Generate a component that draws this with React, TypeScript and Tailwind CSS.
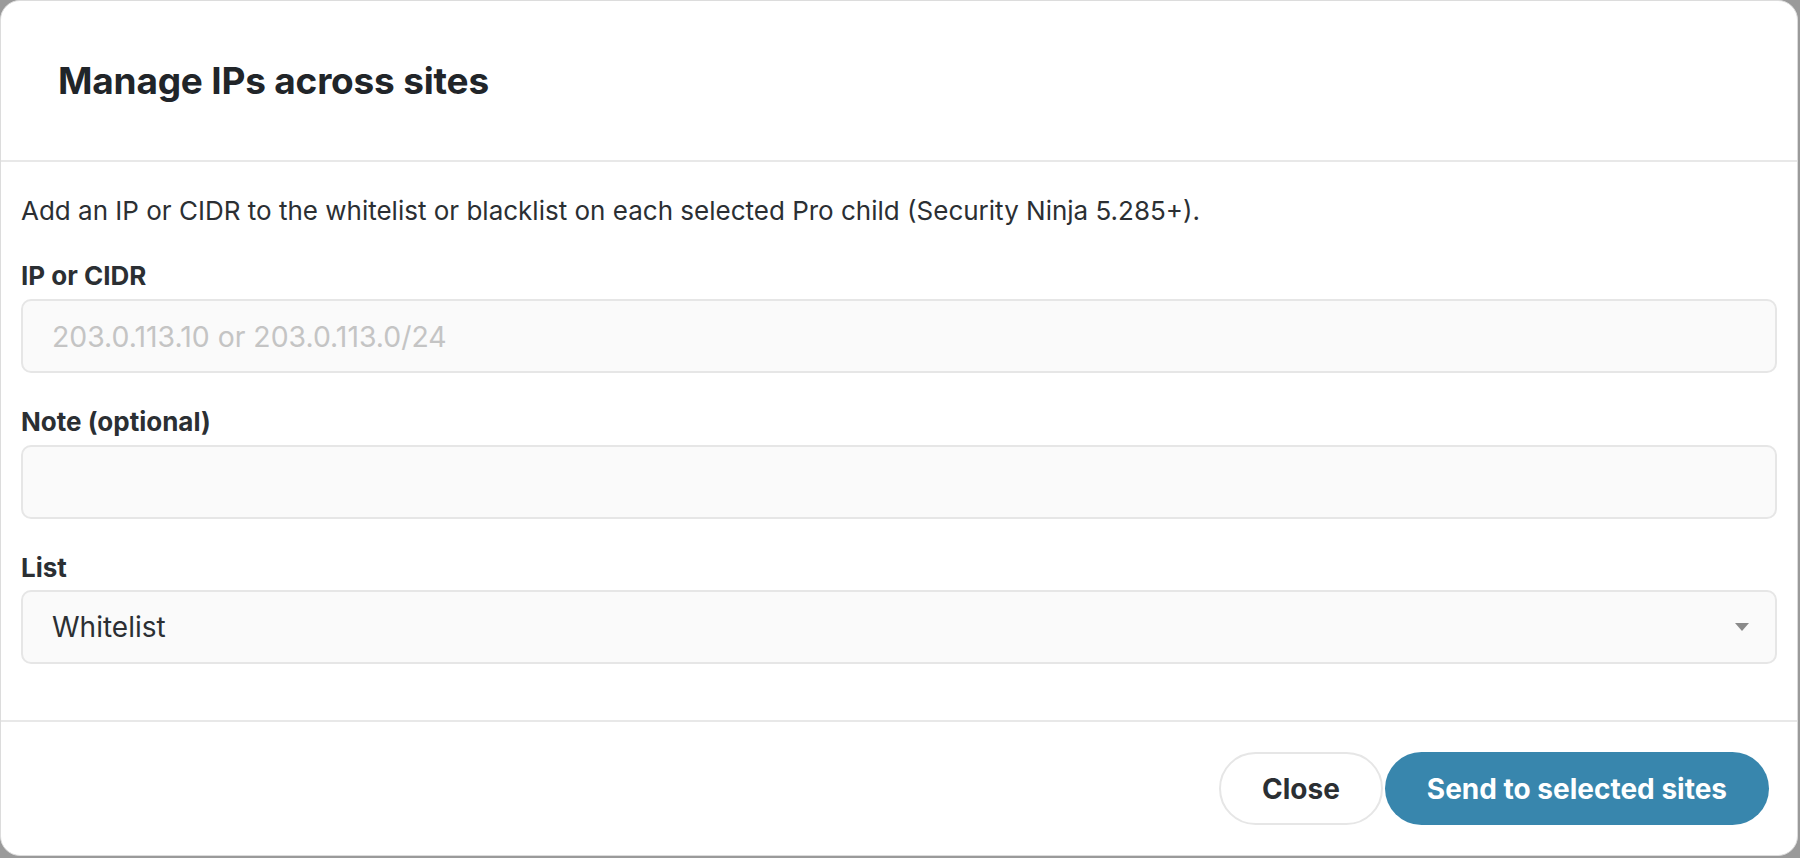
const fields = [
  { label: "IP or CIDR", placeholder: "203.0.113.10 or 203.0.113.0/24" },
  { label: "Note (optional)", placeholder: "" },
];

export default function App() {
  return (
    <div
      className="w-[1800px] h-[858px] bg-[#9a9a9a] flex"
      style={{ fontFamily: "Inter, 'Noto Sans', sans-serif" }}
    >
      <div className="w-[1798px] h-[856px] bg-white rounded-[20px] border border-[#dcdcdc] flex flex-col overflow-hidden">
        {/* header */}
        <div className="h-[161px] shrink-0 flex items-center pl-[57px] border-b-2 border-[#e8e8e8]">
          <h1 className="text-[37px] font-bold text-[#212529] tracking-[-0.2px]">
            Manage IPs across sites
          </h1>
        </div>

        {/* body */}
        <div className="flex-1 flex flex-col px-[20px] pt-[29px]">
          <p className="text-[26px] leading-[39px] text-[#2b2f33] mb-[26px]">
            Add an IP or CIDR to the whitelist or blacklist on each selected Pro child (Security Ninja 5.285+).
          </p>

          {fields.map((f) => (
            <div key={f.label} className="flex flex-col mb-[29px]">
              <label className="text-[26px] leading-[40px] font-bold text-[#2b2f33] mb-[3px]">
                {f.label}
              </label>
              <input
                className="h-[74px] w-full rounded-[10px] border-2 border-[#e6e6e6] bg-[#fafafa] pl-[29px] text-[28.4px] text-[#2b2f33] placeholder:text-[#c4c4c4] outline-none"
                placeholder={f.placeholder}
              />
            </div>
          ))}

          <div className="flex flex-col">
            <label className="text-[26px] leading-[40px] font-bold text-[#2b2f33] mb-[2px]">
              List
            </label>
            <div className="h-[74px] w-full rounded-[10px] border-2 border-[#e6e6e6] bg-[#fafafa] pl-[29px] pr-[26px] flex items-center justify-between">
              <span className="text-[28px] text-[#2b2f33]">Whitelist</span>
              <svg width="14" height="8" viewBox="0 0 14 8">
                <path d="M0 0 L14 0 L7 8 Z" fill="#8a8a8a" />
              </svg>
            </div>
          </div>
        </div>

        {/* footer */}
        <div className="h-[135px] shrink-0 border-t-2 border-[#e8e8e8] flex items-center justify-end pr-[28px] gap-[2px]">
          <button className="h-[73px] px-[41px] rounded-full border-2 border-[#e6e6e6] bg-white text-[28px] font-bold text-[#2b2f33]">
            Close
          </button>
          <button className="h-[73px] px-[42px] rounded-full bg-[#3886ad] text-[28px] font-bold text-white">
            Send to selected sites
          </button>
        </div>
      </div>
    </div>
  );
}
